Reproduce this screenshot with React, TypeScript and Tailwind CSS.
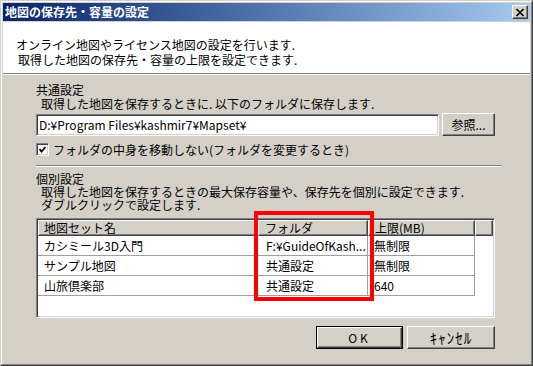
import React from "react";

const raised =
  "border border-t-white border-l-white border-r-[#404040] border-b-[#404040] shadow-[inset_-1px_-1px_0_#808080] bg-[#d4d0c8]";
const sunken =
  "border border-t-[#808080] border-l-[#808080] border-r-white border-b-white shadow-[inset_1px_1px_0_#404040,inset_-1px_-1px_0_#d4d0c8]";

const rows = [
  ["カシミール3D入門", "F:¥GuideOfKash...", "無制限"],
  ["サンプル地図", "共通設定", "無制限"],
  ["山旅倶楽部", "共通設定", "640"],
];

export default function App() {
  return (
    <div className="relative w-[533px] h-[366px] overflow-hidden border border-t-[#d4d0c8] border-l-[#d4d0c8] border-r-[#404040] border-b-[#404040] bg-[#d4d0c8] font-['Noto_Sans_CJK_JP',sans-serif] text-[12px] text-black">
      <div className="flex flex-col h-full border border-t-white border-l-white border-r-[#808080] border-b-[#808080] p-px">
        {/* Title bar */}
        <div className="h-[18px] flex items-center justify-between bg-linear-to-r from-[#0a246a] to-[#a6caf0] pl-[2px] pr-[2px]">
          <span className="text-white font-bold text-[12px] leading-[18px]">地図の保存先・容量の設定</span>
          <div className={`w-[16px] h-[14px] flex items-center justify-center ${raised}`}>
            <svg width="10" height="9" viewBox="0 0 10 9">
              <path d="M1.5 1 L8.5 8 M8.5 1 L1.5 8" stroke="#000" strokeWidth="1.7" />
            </svg>
          </div>
        </div>
        {/* Header */}
        <div className="mt-px h-[51px] bg-white pl-[13px] pt-[15px] leading-[15px]">
          <div>オンライン地図やライセンス地図の設定を行います.</div>
          <div className="pl-[2px]">取得した地図の保存先・容量の上限を設定できます.</div>
        </div>
        <div className="border-t border-t-[#808080] border-b border-b-white" />
        {/* Body */}
        <div className="flex flex-col pl-[33px] pr-[35px] pt-[8px]">
          <div className="leading-[14px]">
            <div>共通設定</div>
            <div className="pl-[5px]">取得した地図を保存するときに. 以下のフォルダに保存します.</div>
          </div>
          <div className="flex items-end mt-[2px]">
            <div className={`w-[403px] h-[22px] bg-white pl-[2px] flex items-center leading-[14px] ${sunken}`}>
              D:¥Program Files¥kashmir7¥Mapset¥
            </div>
            <div className={`ml-[3px] w-[53px] h-[23px] flex items-center justify-center leading-[14px] ${raised}`}>
              参照...
            </div>
          </div>
          <div className="flex items-center mt-[7px] h-[13px]">
            <div className={`w-[13px] h-[13px] bg-white flex items-center justify-center ${sunken}`}>
              <svg width="9" height="9" viewBox="0 0 9 9">
                <polyline points="1.5,4 3.5,6.5 7.5,2" fill="none" stroke="#000" strokeWidth="1.8" />
              </svg>
            </div>
            <span className="ml-[4px] leading-[13px]">フォルダの中身を移動しない(フォルダを変更するとき)</span>
          </div>
          <div className="mt-[9px] mr-[-7px] border-t border-t-[#808080] border-b border-b-white" />
          <div className="mt-[5px] leading-[13px]">
            <div>個別設定</div>
            <div className="pl-[5px]">取得した地図を保存するときの最大保存容量や、保存先を個別に設定できます.</div>
            <div className="pl-[5px]">ダブルクリックで設定します.</div>
          </div>
          {/* List view */}
          <div className={`mt-[7px] h-[100px] bg-white p-px ${sunken}`}>
            <div className="flex h-[16px] leading-[14px]">
              <div className={`w-[220px] pl-[5px] ${raised}`}>地図セット名</div>
              <div className={`w-[110px] pl-[6px] ${raised}`}>フォルダ</div>
              <div className={`w-[107px] pl-[6px] ${raised}`}>上限(MB)</div>
              <div className={`flex-1 ${raised}`} />
            </div>
            {rows.map((r, i) => (
              <div key={i} className="flex h-[20px] leading-[14px]">
                <div className="w-[220px] pl-[6px] flex items-center border-r border-b border-[#a0a0a0]">{r[0]}</div>
                <div className="w-[110px] pl-[8px] flex items-center border-r border-b border-[#a0a0a0]">{r[1]}</div>
                <div className="w-[107px] pl-[6px] flex items-center border-r border-b border-[#a0a0a0]">{r[2]}</div>
              </div>
            ))}
          </div>
          {/* Buttons */}
          <div className="mt-[8px] flex justify-end gap-[4px]">
            <div className="w-[87px] h-[23px] border border-black">
              <div className={`w-full h-full flex items-center justify-center leading-[14px] tracking-[3px] ${raised}`}>OK</div>
            </div>
            <div className={`w-[88px] h-[23px] flex items-center justify-center text-[15px] leading-[15px] tracking-[1px] ${raised}`}>
              ｷｬﾝｾﾙ
            </div>
          </div>
        </div>
      </div>
      {/* Red annotation */}
      <div className="absolute left-[253px] top-[210px] w-[120px] h-[90px] border-4 border-[#ff0000]" />
    </div>
  );
}
